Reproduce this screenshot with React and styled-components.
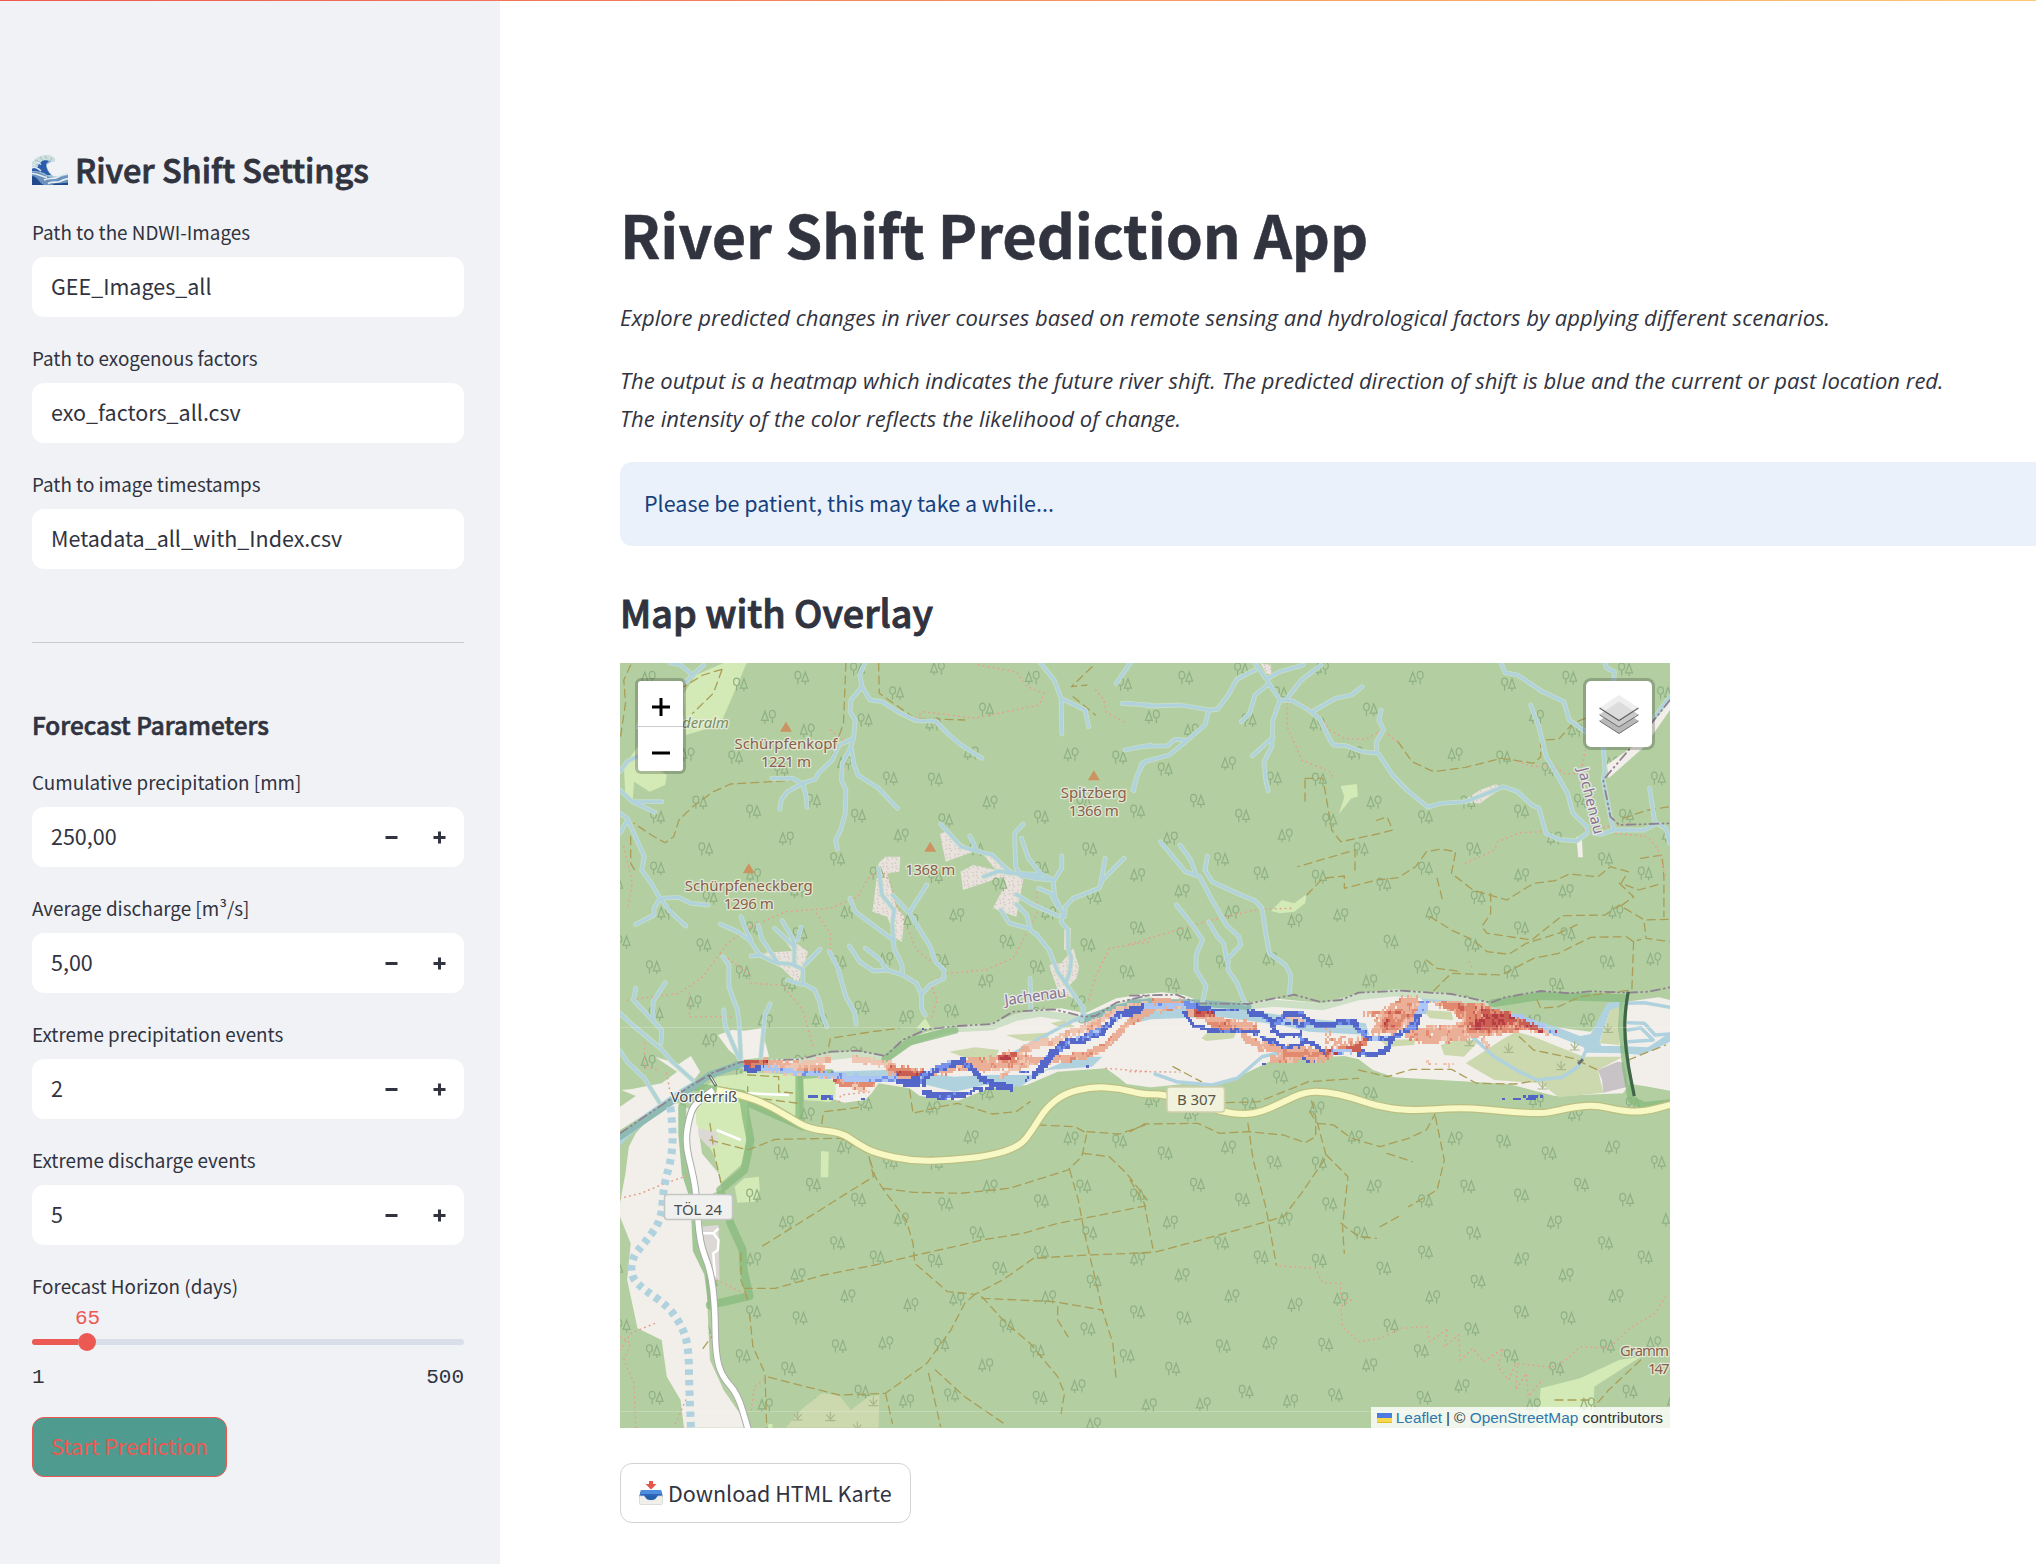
import React from "react";
import styled, { createGlobalStyle } from "styled-components";

const sans = `"Noto Sans CJK SC", "Noto Sans", sans-serif`;
const mono = `"Liberation Mono", monospace`;
const ink = "#31333f";
const primary = "#ec5953";

const GlobalStyle = createGlobalStyle`
  *, *::before, *::after { box-sizing: border-box; }
  body {
    margin: 0;
    background: #fff;
    color: ${ink};
    font-family: ${sans};
    font-size: 21.6px;
    overflow: hidden;
  }
  h1, h2, h3, p { margin: 0; }
`;

/* ---------- layout ---------- */

const Page = styled.div`
  display: flex;
  height: 1564px;
  overflow: hidden;
  border-top: 1px solid;
  border-image: linear-gradient(90deg, #f0594f, #fbc975) 1;
`;

const Sidebar = styled.aside`
  flex: 0 0 500px;
  padding: 142px 36px 0 32px;
  background: #f0f2f6;
`;

const Main = styled.main`
  flex: 1;
  min-width: 0;
  padding: 193px 0 0 120px;
`;

/* ---------- typography ---------- */

const SemiBold = `
  font-weight: 500;
  -webkit-text-stroke: 0.026em currentColor;
`;

const SidebarTitle = styled.h2`
  ${SemiBold}
  display: flex;
  align-items: center;
  gap: 7px;
  height: 54px;
  font-size: 32.4px;
  line-height: 51px;
`;

const TitleText = styled.span`
  height: 54px;
`;

const SidebarSubtitle = styled.h3`
  ${SemiBold}
  font-size: 24.3px;
  line-height: 28px;
  height: 32px;
  margin-bottom: 28px;
`;

const PageTitle = styled.h1`
  font-size: 59.4px;
  font-weight: 700;
  line-height: 79px;
  letter-spacing: -0.17px;
  -webkit-text-stroke: 0.008em currentColor;
`;

const SectionTitle = styled.h2`
  ${SemiBold}
  font-size: 37.7px;
  line-height: 50px;
  margin: 41px 0 26px;
`;

const Lead = styled.p`
  font-family: "Open Sans", "Noto Sans", sans-serif;
  font-style: italic;
  font-size: 22px;
  line-height: 38px;
  margin-top: ${(p) => p.$top}px;
`;

const Line = styled.span`
  display: block;
  letter-spacing: ${(p) => p.$tracking}px;
`;

/* ---------- form ---------- */

const Fields = styled.div`
  display: flex;
  flex-direction: column;
  gap: 30px;
  margin-top: ${(p) => p.$top || 0}px;
`;

const Field = styled.label`
  display: flex;
  flex-direction: column;
  gap: 6px;
`;

const FieldLabel = styled.span`
  font-size: 18.85px;
  line-height: 22px;
  height: 30px;
`;

const InputBox = styled.span`
  display: flex;
  align-items: center;
  height: 60px;
  padding: 0 18.5px 0 19px;
  border-radius: 12px;
  background: #fff;
  font-size: 21.5px;
  line-height: 58px;
`;

const InputValue = styled.span`
  flex: 1;
  height: 60px;
`;

const Steppers = styled.span`
  display: flex;
  gap: 35px;
`;

const Divider = styled.hr`
  height: 1px;
  margin: 73px 0 68px;
  border: 0;
  background: #c9cbd1;
`;

const Slider = styled.div`
  display: flex;
  flex-direction: column;
  margin-top: 30px;
`;

const SliderTop = styled.div`
  height: 22px;
  margin-top: 3px;
  font: 21px/22px ${mono};
  color: ${primary};
`;

const SliderValue = styled.span`
  display: inline-block;
  width: 111px;
  text-align: center;
`;

const Track = styled.div`
  display: flex;
  align-items: center;
  height: 6px;
  margin: 9px 0 21px;
  border-radius: 3px;
  background: #d9dfe9;
`;

const TrackFill = styled.div`
  width: 46px;
  height: 6px;
  border-radius: 3px 0 0 3px;
  background: ${primary};
`;

const Thumb = styled.div`
  width: 18px;
  height: 18px;
  border-radius: 50%;
  background: ${primary};
`;

const SliderRange = styled.div`
  display: flex;
  justify-content: space-between;
  font: 21px/24px ${mono};
`;

const Button = styled.button`
  display: flex;
  align-items: center;
  gap: ${(p) => p.$gap || 0}px;
  width: max-content;
  height: 60px;
  padding: 0 18px ${(p) => (p.$primary ? 2 : 0)}px;
  border: 1px solid ${(p) => (p.$primary ? primary : "#d2d3d6")};
  border-radius: 12px;
  background: ${(p) => (p.$primary ? "#509b8f" : "#fff")};
  color: ${(p) => (p.$primary ? primary : ink)};
  font: 400 21.5px/56px ${sans};
  margin-top: ${(p) => p.$top}px;
`;

const Alert = styled.div`
  height: 84px;
  margin-top: 25px;
  padding: 0 24px;
  border-radius: 12px 0 0 12px;
  background: #eaf1fb;
  color: #16407e;
  font-size: 21.5px;
  line-height: 82px;
`;

/* ---------- map ---------- */

const MapFrame = styled.div`
  position: relative;
  width: 1050px;
  height: 765px;
  overflow: hidden;
  background: #b3cfa2;
`;

const MapCanvas = styled.svg`
  display: block;
`;

const ZoomControl = styled.div`
  position: absolute;
  top: 15px;
  left: 15px;
  display: flex;
  flex-direction: column;
  border: 3px solid rgba(0, 0, 0, 0.2);
  border-radius: 6px;
  background: #fff;
  background-clip: padding-box;
`;

const ZoomButton = styled.div`
  display: flex;
  align-items: center;
  justify-content: center;
  width: 45px;
  height: 45px;
  padding-top: 7px;
  & + & {
    border-top: 1px solid #ccc;
  }
`;

const LayersControl = styled.div`
  position: absolute;
  top: 15px;
  right: 15px;
  display: flex;
  align-items: center;
  justify-content: center;
  width: 72px;
  height: 72px;
  border: 3px solid rgba(0, 0, 0, 0.2);
  border-radius: 8px;
  background: #fff;
  background-clip: padding-box;
`;

const Attribution = styled.div`
  position: absolute;
  right: 0;
  bottom: 0;
  display: flex;
  align-items: center;
  gap: 4px;
  height: 21px;
  padding: 0 7px 0 6px;
  background: rgba(255, 255, 255, 0.8);
  color: #333;
  font: 15.4px/21px "Liberation Sans", Arial, sans-serif;
  white-space: nowrap;
`;

const MapLink = styled.a`
  color: #2f78ad;
`;

/* ---------- icons ---------- */

const MinusIcon = () => (
  <svg width="13" height="13" viewBox="0 0 13 13"><path d="M0.5 6.5h12" stroke={ink} strokeWidth="3" /></svg>
);
const PlusIcon = () => (
  <svg width="13" height="13" viewBox="0 0 13 13"><path d="M0.5 6.5h12M6.5 0.5v12" stroke={ink} strokeWidth="3" /></svg>
);

const WaveIcon = () => (
  <svg width="36" height="30" viewBox="0 0 36 30">
    <path d="M0 8C3 3 9 0 15 0.500c4 0 8 2 7.500 4 1 2-1 3-3 2-2 2-4 2-5 4 1 4 3 8 7 11 6 0 10-2 14.500-3.500v12H0z" fill="#9dbfd4" />
    <path d="M0 8C3 3 9 0 15 0.500c4 0 8 2 7.500 4 1 2-1 3-3 2l-3-1c-4-1-7 1-8 3-3 0-5 1-8.500 3z" fill="#cfdfdc" />
    <path d="M9 7c2-2 5-2 8-1l-3 3c0 4 2 8 5 11l-4 0c-4-3-8-4-15-4v-2c5-2 6-3 9-7z" fill="#2d5cae" />
    <path d="M0 12c4 0 7 2 9 4M1 9.500l5 2M5 6.500l4 3" stroke="#e4eef2" strokeWidth="1.300" fill="none" />
    <path d="M0 17c7-1 12 3 17 5s12 0 19-2v10H0z" fill="#6a91bf" />
    <path d="M0 18.500c6 0 9 3 15 4M12 25c5-3 10 0 14-3s7-3 10-3M16 28.500c5-3 8 0 12-2s5-2 8-3" stroke="#e3edf0" strokeWidth="1.700" fill="none" />
    <path d="M0 21c6 1 7 7 12 9H0zM20 30c5-3 10-1 16-2.500v2.500z" fill="#214a8c" />
    <path d="M3 5l5 2m0-5l3 4m2-5l2 3m5-1l-2 3" stroke="#9fbec8" strokeWidth="1" />
  </svg>
);

const InboxIcon = () => (
  <svg width="24" height="24" viewBox="0 0 24 24">
    <path d="M0 16L2 9h20l2 7z" fill="#2c5fa8" />
    <path d="M2 9h20l1 7H1z" fill="#4d8de0" />
    <path d="M2 13h20v3l-6 4H8l-6-4z" fill="#2b66b8" />
    <path d="M0.5 15h4.500c1 0 1.500 4 7 4s6-4 7-4h4.500v7.500q0 1-1 1h-21q-1 0-1-1z" fill="#efefeb" stroke="#d2d1cc" strokeWidth="0.7" />
    <path d="M6 15c1 3 3 4 6 4s5-1 6-4z" fill="#2560ad" />
    <path d="M10 0h4v3h3.500L12 8.500 6.500 3H10z" fill="#e5574b" />
  </svg>
);

const LayersIcon = () => (
  <svg width="40" height="40" viewBox="0 0 40 40">
    <path d="M20 14L39.500 26.800 20 39.500 0.500 26.800z" fill="#b8b8b8" />
    <path d="M0.500 27L20 39.500 39.500 27" fill="none" stroke="#6e6e6e" strokeWidth="1" />
    <path d="M20 8L39.500 20.500 20 33 0.500 20.500z" fill="#cacaca" />
    <path d="M0.500 20.800L20 33 39.500 20.800" fill="none" stroke="#6e6e6e" strokeWidth="1" />
    <path d="M20 1L39.500 13.800 20 26.300 0.500 13.800z" fill="#eeeeee" />
    <path d="M20 7.500L34.500 17 20 26 5.500 17z" fill="#dcdcdc" />
    <path d="M0.500 14L20 26.500 39.500 14" fill="none" stroke="#5f5f5f" strokeWidth="1.200" />
  </svg>
);

const FlagIcon = () => (
  <svg width="15" height="10" viewBox="0 0 15 10">
    <path d="M0 0h15v5H0z" fill="#4c7be1" />
    <path d="M0 5h15v5H0z" fill="#f8d748" />
    <path d="M0 9h15v1H0z" fill="#e0bc30" />
  </svg>
);

/* ---------- map geometry ----------
   The map is digitised as four sheets; each one has its own grid. */

const sheets = {
  nw: { x: -10, y: -13, kx: 1 / 2.904, ky: 1 / 3 },
  ne: { x: 510, y: -13, kx: 1 / 2.8, ky: 1 / 3 },
  sw: { x: -10, y: 297, kx: 1 / 2.904, ky: 1 / 3 },
  se: { x: 510, y: 297, kx: 1 / 2.8, ky: 1 / 3 },
};

const project = (sheet, text) => {
  const s = sheets[sheet];
  return text.trim().split(/\s+/).map((pair) => {
    const [x, y] = pair.split(",").map(Number);
    return [s.x + x * s.kx, s.y + y * s.ky];
  });
};

const toPath = (points) => "M" + points.map(([x, y]) => `${x.toFixed(1)} ${y.toFixed(1)}`).join("L");
const lines = (entries) => entries.map(([sheet, text]) => toPath(project(sheet, text))).join("");
const areas = (entries) => entries.map(([sheet, text]) => toPath(project(sheet, text)) + "Z").join("");

/* midpoint-smoothed curve for the main roads */
const smooth = (points) => {
  let d = `M${points[0][0]} ${points[0][1]}`;
  for (let i = 1; i < points.length - 1; i++) {
    const [x, y] = points[i];
    const [nx, ny] = points[i + 1];
    d += `Q${x.toFixed(1)} ${y.toFixed(1)} ${((x + nx) / 2).toFixed(1)} ${((y + ny) / 2).toFixed(1)}`;
  }
  const last = points[points.length - 1];
  return d + `L${last[0]} ${last[1]}`;
};

const streams = lines([
  ["nw", "175,39 205,45 240,75 220,95"], ["nw", "240,75 272,45"],
  ["nw", "740,40 725,75 732,110 755,150 790,155 840,188 890,212 945,213 985,255 1020,285 1080,325"],
  ["nw", "732,110 700,150 697,185 712,210 708,260 700,290 708,340 720,375 780,415 835,475"],
  ["nw", "708,265 665,285 645,330 605,370 595,388 560,400 530,385 470,385"],
  ["nw", "560,400 515,425 497,450 493,478"], ["nw", "560,400 570,440 572,472"],
  ["nw", "700,290 675,340 672,390 685,420 683,490 670,540 655,570 660,597"],
  ["nw", "29,490 50,505 65,540 100,620 92,660 120,700 145,745 200,742 235,760 285,765"],
  ["nw", "145,745 180,790 220,828"], ["nw", "145,745 128,775 128,795 75,823"],
  ["nw", "29,550 48,515"], ["nw", "29,365 50,335 78,320"], ["nw", "29,420 65,455 150,455"], ["nw", "65,455 130,487"],
  ["nw", "1250,39 1290,90 1310,145 1380,180 1390,230"], ["nw", "1310,145 1312,252"],
  ["nw", "1510,40 1490,70 1470,100"], ["nw", "1568,330 1545,340 1530,380 1518,420"],
  ["nw", "1495,300 1570,285"], ["nw", "1487,160 1568,165"],
  ["nw", "960,522 1020,590 1065,603 1110,615 1160,665 1230,685 1285,690"],
  ["nw", "1045,558 1065,600"], ["nw", "1200,522 1175,550 1178,650 1195,680 1250,678"],
  ["nw", "1195,565 1215,625 1250,670 1285,690"], ["nw", "1085,680 1130,663 1165,670 1250,673"],
  ["nw", "1312,618 1312,655 1287,695 1292,740 1315,790 1310,815 1330,840 1330,895 1340,925 1335,965 1325,995"],
  ["nw", "1245,715 1280,730 1300,770"], ["nw", "1180,733 1225,762 1300,797"],
  ["nw", "1493,625 1430,690 1420,715 1345,745 1322,770 1320,800"], ["nw", "1438,625 1425,700"],
  ["nw", "1135,780 1160,820 1215,835 1240,855 1275,900 1300,965 1330,1010 1375,1075 1370,1110"],
  ["nw", "1180,762 1210,795 1220,835"],
  ["nw", "780,655 790,735 825,780 820,820 825,895 848,945 850,975 890,1000 905,1035 905,1075 915,1095"],
  ["nw", "920,705 870,787"], ["nw", "820,735 870,790 930,890 945,935 970,960 970,985 930,1005 905,1032"],
  ["nw", "697,745 712,785 825,872"], ["nw", "695,888 725,935 765,963 805,960 850,975"], ["nw", "742,895 780,925 805,960"],
  ["nw", "637,905 660,950 685,1040 710,1085 715,1122"],
  ["nw", "320,822 370,845 405,870 435,915 480,938 530,943 560,958 560,1000 595,1020 610,1060 615,1090 630,1130"],
  ["nw", "380,800 395,840 410,870"], ["nw", "430,825 440,865 485,935"], ["nw", "410,918 440,915"],
  ["nw", "478,835 520,875 535,890 535,940"], ["nw", "500,812 530,865 537,890"], ["nw", "555,832 545,870"],
  ["nw", "610,897 565,945"], ["nw", "515,990 555,1003"],
  ["nw", "328,920 345,945 345,1010 370,1080 375,1120 380,1225"], ["nw", "330,1080 335,1130 375,1225"],
  ["nw", "465,1062 450,1095 438,1220"],
  ["nw", "75,1015 68,1050 100,1085 150,1140 148,1180"], ["nw", "160,998 125,1055 125,1105"],
  ["nw", "29,1090 60,1120 150,1198 180,1235 240,1290"], ["sw", "29,272 50,305 100,355 145,430"],
  ["nw", "1220,985 1222,1080"],
  ["ne", "0,160 60,168 140,165 225,180 245,178 275,135 300,87 350,60"],
  ["ne", "0,297 30,290 105,287 125,268 150,270"], ["ne", "10,422 20,375 40,335 110,315 150,280 210,225 220,180"],
  ["ne", "350,40 380,85 420,150 455,152 500,180 530,205 560,270 570,285 605,287 650,305 695,310 735,375 775,420 835,472 870,460 940,455 1000,430 1045,410 1085,425 1125,465 1145,475 1165,550 1200,568 1250,573 1280,550 1280,530 1240,490 1225,430 1185,355 1165,320 1145,230 1122,165"],
  ["ne", "385,85 420,65 485,45"], ["ne", "535,45 480,90 440,145"], ["ne", "385,105 350,135 335,190 312,215"],
  ["ne", "420,150 400,210 397,290 375,335 380,390 387,422"], ["ne", "400,262 342,318"],
  ["ne", "510,185 575,145 620,135 650,110"], ["ne", "703,180 697,210 710,240 690,275 690,308"],
  ["ne", "1040,40 1050,68 1085,75 1155,125 1215,155 1230,210 1275,245"],
  ["ne", "1330,40 1335,55 1357,65 1355,90"], ["ne", "1325,295 1330,360 1325,390 1345,500 1355,540 1320,553 1300,550"],
  ["ne", "1512,140 1470,200"], ["ne", "1355,540 1440,540 1475,520 1500,535 1512,580"], ["ne", "1455,415 1470,520"],
  ["ne", "85,575 155,665 195,680 230,750 270,825 305,860 310,885 275,925 275,960 300,1000 322,1060"],
  ["ne", "140,585 170,630 185,675"],
  ["ne", "217,618 210,660 230,695 300,730 350,752 370,775 380,850 390,910 435,945 450,975 447,1030"],
  ["ne", "130,765 175,825 203,870 185,915 185,960 213,1008 203,1055"], ["ne", "220,815 245,860 262,880 272,935"],
]);

const riverArms = lines([
  ["se", "70,342 130,365 230,375 300,355 370,290 430,275"], ["se", "960,232 1020,290 1090,335 1140,360 1210,352 1255,320 1275,275"],
  ["se", "1390,130 1440,128 1512,142"], ["se", "1395,188 1440,190 1470,225 1512,222"], ["se", "1395,210 1430,203 1465,240 1395,245"],
  ["sw", "1165,285 1240,240 1330,190 1380,165"],
]);

const water = areas([
  ["se", "800,98 920,108 1040,150 1110,172 1200,203 1260,228 1290,222 1335,130 1380,122 1375,150 1345,150 1315,245 1320,258 1370,258 1450,262 1512,218 1512,245 1460,272 1430,285 1380,280 1275,278 1270,262 1180,222 1080,190 1000,150 820,122"],
  ["sw", "29,525 90,470 200,390 290,335 380,302 460,322 640,335 800,330 910,340 1000,350 1100,345 1230,345 1350,290 1430,290 1400,320 1270,330 1190,380 1090,375 1000,395 900,370 700,350 380,322 300,350 190,420 60,525 29,556"],
  ["se", "0,140 160,140 330,150 480,175 660,190 670,225 500,215 420,195 250,170 60,178 0,192"],
]);

const beds = areas([
  ["sw", "380,300 440,300 640,292 715,280 800,292 850,245 920,215 1000,205 1110,195 1170,165 1230,150 1310,145 1380,160 1470,115 1568,100 1568,370 1500,345 1440,325 1300,335 1210,375 1100,385 1040,410 1010,422 900,408 870,385 780,370 760,400 740,420 680,428 650,418 640,380 560,345 450,330 380,325"],
  ["se", "0,105 90,97 150,105 200,125 330,132 400,115 540,130 640,120 720,95 860,100 1040,150 1180,200 1290,215 1360,130 1480,112 1512,120 1512,392 1440,378 1400,372 1380,400 1190,408 1060,372 740,352 680,330 640,298 600,288 400,300 300,352 235,378 150,372 60,382 0,372"],
  ["sw", "1480,355 1440,325 1568,310 1568,382 1500,372"],
  ["sw", "130,290 200,312 235,288 262,335 225,385 160,425 29,510 29,440 75,408 33,390 60,388 150,370 195,335"],
  ["sw", "150,435 200,430 250,460 270,600 258,700 275,860 290,1200 330,1290 405,1403 215,1403 205,1320 165,1250 150,1140 80,1105 50,960 60,850 29,770 29,730 45,640 55,560 75,520"],
  ["sw", "313,225 355,210 390,212 440,205 462,290 380,300 345,270"],
  ["sw", "235,540 275,590 315,640 325,690 300,700 290,740 250,735 245,650"],
  ["ne", "1335,345 1420,280 1512,150 1512,180 1440,290 1340,385"], ["ne", "1250,560 1265,560 1268,622 1255,622"],
]);

const screes = areas([
  ["nw", "958,552 975,545 1055,605 975,635"], ["nw", "1018,665 1055,645 1120,660 1085,615 1120,620 1200,690 1180,800 1112,775 1150,700 1140,680 1025,720"],
  ["nw", "780,640 800,620 843,620 840,665 805,670 830,770 855,800 848,875 830,865 805,800 762,785"],
  ["nw", "480,835 575,905 545,1002 500,955 440,925 450,908 530,903"],
  ["nw", "1275,945 1310,940 1345,895 1362,950 1355,985 1330,1010 1345,1045 1300,1020"], ["nw", "1320,830 1338,835 1336,895 1318,900"],
  ["ne", "925,458 980,420 1025,403 1040,415 980,460"], ["ne", "365,40 395,45 395,75 380,70"],
]);

const meadows = areas([
  ["nw", "250,75 330,39 397,39 355,140 320,225 220,255 215,130"], ["nw", "40,350 80,290 215,250 120,345 165,375 160,405 115,425 70,395 65,460 45,440"],
  ["ne", "590,408 635,402 638,440 620,445 585,492 600,440"], ["ne", "395,783 425,750 460,760 495,732 490,760 460,785 420,790"],
  ["sw", "270,390 310,350 400,340 545,345 550,470 500,460 400,415 395,540 385,610 325,665 300,580 245,490 230,450"],
  ["sw", "560,350 655,360 655,410 640,425 565,420"], ["sw", "613,573 635,575 634,652 612,652"],
  ["sw", "362,680 390,655 432,650 435,690 420,725 370,728"], ["sw", "890,205 915,175 935,208"],
  ["se", "1150,1285 1260,1255 1370,1200 1430,1190 1300,1280 1295,1403 1140,1403"], ["sw", "460,1392 472,1392 472,1403 458,1403"],
]);

const scrub = areas([
  ["sw", "510,1403 560,1345 615,1300 665,1305 700,1350 750,1310 782,1305 780,1403"],
  ["sw", "1150,225 1270,218 1275,240 1200,243"], ["sw", "985,275 1060,262 1130,270 1110,310 1050,300"], ["sw", "1280,190 1320,180 1350,200 1310,205"],
  ["se", "200,235 230,205 300,210 290,235 215,243"], ["se", "820,150 900,155 905,180 840,175"], ["se", "700,240 800,238 795,255 720,260"],
  ["se", "940,310 1040,240 1080,215 1130,230 1270,290 1380,290 1310,330 1325,398 1200,412 1150,370 1020,360"],
  ["se", "870,255 930,235 975,245 935,290 880,285"], ["se", "1345,150 1370,140 1370,255 1315,250"],
]);

const protectedStrips = lines([
  ["sw", "550,470 550,345 640,340"], ["sw", "245,380 385,402 395,470 408,540 390,630 320,690 350,790 385,870 388,930 405,1008 290,1035"],
  ["sw", "210,440 210,520 220,640 245,720 252,870 285,940 298,1040"], ["sw", "385,420 460,455 560,500"],
  ["sw", "800,296 870,245 1000,210"],
  ["se", "1015,130 1150,108 1250,110 1385,115"], ["se", "1383,120 1378,200 1390,330 1405,420 1440,438 1512,430"],
]);
const paleStrips = lines([
  ["sw", "550,305 640,290 710,282 800,298 860,250 980,208 1110,200 1180,172 1250,160 1380,180 1470,140 1568,120"],
  ["se", "0,128 180,130 330,138 400,130 540,140 640,110 740,98 900,112 1010,138"],
]);
const greenStream = lines([["sw", "29,530 200,410 290,345 380,312 450,312"], ["sw", "1370,180 1470,145 1568,125"], ["se", "0,128 180,128 330,140"]]);

const boundary = lines([
  ["sw", "29,520 200,400 295,340 380,306 550,298 640,275 720,272 800,288 850,240 920,208 1010,198 1110,192 1170,155 1290,148 1375,170 1410,168 1470,128 1568,105"],
  ["se", "0,107 130,104 190,130 330,132 390,118 460,104 530,125 590,120 640,98 760,92 900,102 1010,128 1050,112 1150,93 1230,100 1290,94 1395,98 1450,95 1512,82"],
  ["ne", "1512,150 1460,220 1325,390 1345,500 1370,525 1512,520"],
]);

const trails = lines([
  ["nw", "685,39 678,220 640,330"], ["nw", "780,39 782,130 885,205 1030,210"], ["nw", "545,390 420,398 350,402 300,425 240,470 200,510 185,560 160,578 120,555 70,520"],
  ["nw", "60,45 40,90 45,160 29,270"], ["nw", "325,58 270,75 215,110"], ["nw", "325,60 300,130 240,190"], ["nw", "60,560 60,640 75,665"], ["nw", "1400,50 1340,110 1385,105"], ["nw", "1345,140 1410,195"],
  ["nw", "635,1190 640,1165 760,1145 840,1135"],
  ["ne", "750,275 790,335 850,365 940,352 1040,325 1130,340 1150,320 1150,270 1200,268 1240,220 1275,205"],
  ["ne", "490,385 540,385 565,540 590,575 680,555 735,540 720,500 680,515"], ["ne", "490,390 490,455"],
  ["ne", "495,735 540,685 600,678 600,715 690,690 750,683 800,650 830,605 870,597 912,605 900,670 960,720 1055,750 1130,700 1190,692 1230,672 1310,680 1345,650 1395,665 1375,700 1425,720 1490,700"],
  ["ne", "630,660 630,600 470,650"], ["ne", "1010,730 1010,790 985,830 1000,850 1125,870 1210,797 1330,795 1370,765 1440,810 1512,808"], ["ne", "1440,820 1445,865 1512,875"],
  ["ne", "860,685 875,750"], ["ne", "840,800 900,840 960,870 1000,905 1060,913 1110,880 1200,850 1260,820"],
  ["ne", "1410,875 1405,1025"], ["ne", "850,1022 900,970 1040,975 1130,925 1200,910 1290,862 1390,860 1410,875 1430,868"], ["ne", "830,930 860,955 930,965"],
  ["ne", "1430,625 1490,615 1495,680 1495,800"], ["ne", "1380,505 1450,480 1512,470"], ["ne", "1370,700 1410,740 1365,775"],
  ["ne", "1140,1050 1150,1075 1200,1070 1260,1040 1400,1020"],
  ["sw", "290,540 400,570 480,538 670,535 750,580 765,650 440,860"], ["sw", "755,600 770,650 795,690 860,780 880,850 885,910 980,995 1060,1003 1140,960 1230,895 1390,885 1568,878"],
  ["sw", "795,685 880,697 1020,700 1160,685 1330,630 1370,590 1385,520 1350,500 1250,495"], ["sw", "1385,515 1480,522 1568,490"],
  ["sw", "1060,1003 1030,1030 990,1110 920,1210 800,1300 665,1305 455,1250"], ["sw", "390,985 480,985 620,945 770,915 890,885 1000,860 1080,840 1200,820 1300,790 1400,770 1568,735"],
  ["sw", "405,1060 415,1160 450,1240 455,1403"], ["sw", "380,880 380,960 400,1020"], ["sw", "1080,1010 1150,1090 1220,1150 1300,1250 1320,1300 1310,1360"],
  ["sw", "1080,1015 1290,1025 1430,1050 1460,1150 1470,1260"], ["sw", "1335,630 1360,720 1380,830 1410,960 1430,1050"], ["sw", "1375,580 1450,590 1500,640 1560,720"],
  ["sw", "800,1300 820,1390"], ["sw", "945,1230 1030,1310 1150,1395"], ["sw", "925,1240 945,1330 960,1400"], ["sw", "1300,1040 1300,1080 1330,1130"],
  ["sw", "400,345 490,350 490,395 540,400"], ["sw", "400,380 400,410 545,430"], ["sw", "870,390 880,460 960,440 1010,430 1110,462 1180,455 1220,425"], ["sw", "615,490 620,455 740,440"],
  ["se", "0,515 40,492 190,490 250,520 330,515 430,525 490,548 520,530 520,470 505,410"], ["se", "330,490 345,600 380,740 410,915"], ["se", "0,880 75,875 250,825 430,770 480,700 550,590 525,490 500,450"],
  ["se", "525,490 570,495 620,535 700,560 780,535 830,510 855,460"], ["se", "855,470 880,600 860,690 780,740"], ["se", "550,585 610,650 595,800 600,880"], ["se", "590,790 640,830 690,835"], ["se", "720,580 790,605"], ["se", "0,660 40,730 65,870"],
  ["se", "270,428 360,425 500,365 640,355"], ["se", "120,320 200,365"], ["se", "640,330 720,350 790,328 900,328 970,370 1080,372 1150,360"], ["se", "1090,230 1130,270 1240,295 1310,330"], ["se", "1395,300 1500,255"], ["se", "700,800 760,765"],
  ["se", "1430,1200 1340,1290 1300,1340"], ["se", "1190,1320 1300,1320"], ["sw", "290,490 305,590 325,680"], ["sw", "270,1165 295,1130"],
]);

const footpaths = lines([
  ["nw", "1070,45 1180,65 1210,110 1262,130 1245,165 1060,205 910,185 880,210"], ["nw", "1410,120 1435,150 1440,185 1500,220"], ["nw", "640,240 700,290 680,360"], ["nw", "40,590 65,700 50,780"], ["nw", "320,910 340,880 410,830 510,785 640,775 720,740 750,685 790,660 815,700 830,760 870,850 890,900 940,940"],
  ["nw", "600,790 640,850 640,900"], ["nw", "50,1050 200,1030 270,980 320,910 400,970 410,1000 500,1005 560,1080 590,1190"], ["nw", "230,1030 230,1100 360,1100"], ["nw", "935,1100 950,1050 930,1000 980,970 1090,960 1170,925 1215,840 1240,790 1240,720"], ["nw", "1390,1050 1410,980 1450,895 1568,875"],
  ["ne", "455,145 520,185 560,240 600,265 660,268 705,240 750,275"], ["ne", "440,160 440,230 465,290 480,330 560,365 572,390"], ["ne", "1085,335 1130,350 1180,345 1220,372 1262,370 1275,300"], ["ne", "0,882 100,850 220,812 360,778 460,775"], ["ne", "940,640 1020,600 1030,575 1090,548 1160,545"], ["ne", "1270,540 1400,520"], ["ne", "1360,550 1450,560 1480,600 1500,680"], ["ne", "950,935 960,960"],
  ["sw", "29,715 90,700 160,670 230,645"], ["sw", "310,960 390,1000"], ["sw", "29,1130 60,1150 40,1200 70,1270 75,1403"], ["sw", "29,1170 60,1120 130,1090"], ["sw", "190,1390 220,1320"], ["sw", "410,1350 420,1280 450,1255"], ["sw", "100,250 100,320 140,330"], ["sw", "165,340 175,400"],
  ["sw", "1440,325 1568,335"], ["se", "0,335 140,336"], ["se", "420,918 520,925 540,970 590,970 590,1010 620,1020 590,1040 595,1100 640,1145 700,1135 760,1105 830,1100 840,1145 890,1105 880,1160 920,1125 925,1200 960,1165 990,1205 1045,1165 1030,1220 1060,1260 1080,1210 1180,1222 1220,1200 1260,1160 1340,1165 1400,1105 1470,1060 1500,1010"],
  ["se", "1085,1220 1080,1290 1110,1240 1115,1310 1150,1265"], ["sw", "665,425 670,405 760,395"],
]);

const whiteRoad = project("sw", "300,390 250,425 230,470 218,550 240,640 250,700 260,850 292,930 305,1040 306,1180 325,1250 370,1300 400,1403 404,1420");
const sideRoads = lines([["sw", "265,820 300,820 315,840 313,870 300,880 305,950"], ["sw", "315,805 300,820"], ["sw", "400,400 520,405"], ["sw", "310,510 380,540"]]);
const mainRoad = [
  ...project("sw", "310,390 385,405 460,435 520,472 580,508 670,516 720,552 770,580 880,604 990,600 1100,588 1190,560 1230,505 1265,445 1320,400 1400,380 1480,385 1550,404"),
  ...project("se", "90,402 200,435 255,455 320,464 370,455 430,425 490,396 550,395 620,412 690,438 780,453 930,442 1060,455 1160,462 1240,440 1310,436 1360,450 1430,458 1530,430"),
];
const tunnel = project("sw", "175,440 183,500 180,590 155,680 150,780 100,850 65,890 60,950 100,990 170,1040 210,1100 228,1160 230,1280 235,1403");

/* forest symbols repeat once per 384px tile; "a" = broadleaf first, "b" = conifer first */
const forestTile = "112,83,b 378,103,a 556,83,a 718,57,a 831,129,a 952,55,b 461,200,b 574,241,b 740,210,a 939,222,b 1092,178,a 225,313,b 364,322,a 496,358,a 682,340,b 813,385,a 944,388,a 1050,309,b 260,457,a 416,484,a 590,452,a 721,497,a 847,556,b 974,510,a 1105,457,b 137,501,a 513,565,b 277,597,a 660,627,a 1065,597,a 137,655,a 418,675,b 775,670,a 944,680,a 290,743,a 160,789,b 547,723,b 692,786,b 1008,795,b 875,812,b 1131,703,a 416,834,a 551,852,a 272,885,a 37,875,a 125,951,a 386,966,a 802,927,b 665,936,a 962,932,a 1092,993,b 245,1056,b 518,1004,a 609,1110,b 731,1073,a 862,1101,b 991,1083,a 133,1091,a 452,1113,b 290,1171,b"
  .split(" ")
  .map((t) => {
    const [x, y, kind] = t.split(",");
    return [...project("nw", `${x},${y}`)[0], kind];
  });

const treePath = forestTile
  .map(([x, y, kind]) => {
    const s = kind === "a" ? 1 : -1;
    const bx = x - 3.6 * s;
    const px = x + 3.8 * s;
    return (
      `M${bx - 2.900} ${y - 2.500}a2.900 3.700 0 1 1 5.800 0a2.900 3.700 0 1 1 -5.800 0M${bx} ${y + 1}V${y + 6.500}` +
      `M${px} ${y - 5.500}L${px - 3.400} ${y + 3.800}H${px + 3.400}ZM${px} ${y + 3.800}V${y + 7}`
    );
  })
  .join("");

const tiles = [-1, 0, 1, 2].flatMap((i) => [-1, 0, 1, 2].map((j) => [i * 384, j * 384]));

/* ---------- shift heatmap ---------- */

const CELL_W = 1.9;
const CELL_H = 2.7;
const palette = ["#edc3ae", "#e9ab90", "#df8468", "#c95549", "#b2323a", "#a9c4f4", "#6d8bea", "#4b5fc8"];

const random = (() => {
  let seed = 20240;
  return () => {
    seed = (seed * 1664525 + 1013904223) % 4294967296;
    return seed / 4294967296;
  };
})();

const heat = new Map();
/* neighbouring cells share a tone, so intensities form small clusters */
const clusterTone = (cx, cy, tones) => {
  const h = Math.sin(Math.floor(cx / 3) * 127.1 + Math.floor(cy / 2) * 311.7) * 43758.5453;
  const base = h - Math.floor(h);
  return tones[Math.floor((base * 0.75 + random() * 0.25) * tones.length)];
};
const put = (cx, cy, tones) => heat.set(`${cx},${cy}`, clusterTone(cx, cy, tones));

/* brush a ribbon of cells along a line */
const ribbon = (sheet, text, width, tones, density = 1) => {
  const pts = project(sheet, text);
  let wobble = 0;
  for (let i = 1; i < pts.length; i++) {
    const [ax, ay] = pts[i - 1];
    const [bx, by] = pts[i];
    const steps = Math.max(1, Math.ceil(Math.hypot(bx - ax, by - ay)));
    const steep = Math.abs(by - ay) > Math.abs(bx - ax);
    for (let k = 0; k <= steps; k++) {
      if (k % 4 === 0) wobble = (random() - 0.5) * 1.8;
      const x = ax + ((bx - ax) * k) / steps;
      const y = ay + ((by - ay) * k) / steps;
      const half = width / 2;
      for (let o = -half; o <= half; o += 1.3) {
        if (random() < density) {
          put(Math.round((x + (steep ? o + wobble : 0)) / CELL_W), Math.round((y + (steep ? 0 : o + wobble)) / CELL_H), tones);
        }
      }
    }
  }
};

/* fill a polygon with cells */
const patch = (sheet, text, tones, density = 0.98) => {
  const p = project(sheet, text);
  const xs = p.map((q) => q[0]);
  const ys = p.map((q) => q[1]);
  for (let cx = Math.floor(Math.min(...xs) / CELL_W); cx <= Math.max(...xs) / CELL_W; cx++) {
    for (let cy = Math.floor(Math.min(...ys) / CELL_H); cy <= Math.max(...ys) / CELL_H; cy++) {
      const x = cx * CELL_W + (random() - 0.5) * 4;
      const y = cy * CELL_H + (random() - 0.5) * 3;
      let inside = false;
      for (let i = 0, j = p.length - 1; i < p.length; j = i++) {
        if (p[i][1] > y !== p[j][1] > y && x < ((p[j][0] - p[i][0]) * (y - p[i][1])) / (p[j][1] - p[i][1]) + p[i][0]) inside = !inside;
      }
      if (inside && random() < density) put(cx, cy, tones);
    }
  }
};

const PALE = [0, 0, 0, 1];
const SOFT = [0, 1, 1, 1, 2];
const WARM = [1, 2, 2, 2, 3];
const HOT = [2, 3, 3, 4];
const SKY = [5, 5, 5, 6];
const BLUE = [6, 6, 7, 5];
const DEEP = [7, 7, 7, 7, 7, 6];

ribbon("sw", "450,308 560,318 620,330", 7, SOFT, 0.8);
ribbon("sw", "510,322 560,305 635,293", 4, PALE, 0.7);
ribbon("sw", "700,293 760,300 825,312", 4, PALE, 0.6);
ribbon("sw", "400,318 540,335 640,345", 3, PALE);
ribbon("sw", "650,358 700,372 765,368", 4, WARM);
ribbon("sw", "700,375 740,390", 3, PALE, 0.5);
patch("sw", "800,312 860,320 920,330 1010,300 1040,290 1090,290 1150,270 1200,275 1240,300 1160,320 1080,330 1010,325 950,345 850,352 800,345", SOFT);
patch("sw", "800,316 860,318 915,330 900,345 830,345", WARM);
ribbon("sw", "830,338 905,336", 3.500, HOT);
ribbon("sw", "1125,292 1175,278", 3, HOT);
ribbon("sw", "1190,268 1240,248 1290,238 1340,215 1400,190 1440,165 1490,145 1540,133 1568,135", 6, PALE, 0.6);
ribbon("sw", "1385,205 1420,190", 7, SOFT);
ribbon("sw", "1180,300 1240,300 1330,290 1400,275 1440,255 1470,220 1500,185 1568,150", 6, SOFT, 0.8);
ribbon("sw", "1130,350 1160,325 1210,305", 3, PALE, 0.5);
ribbon("sw", "385,306 455,309", 6, HOT);
ribbon("sw", "645,345 655,352", 4, HOT);
ribbon("sw", "388,324 445,324", 3, DEEP);
ribbon("sw", "440,320 500,328 560,335 640,342 740,355 830,348", 3, SKY, 0.8);
ribbon("sw", "680,355 830,352", 3, [5, 5, 6]);
ribbon("sw", "830,360 900,355 950,322 1020,298 1045,320 1080,355 1120,372 1168,380", 4, DEEP);
ribbon("sw", "900,345 960,315 1000,300", 3.500, BLUE);
ribbon("sw", "850,370 910,368", 1.500, DEEP);
ribbon("sw", "908,395 950,402 1030,405", 4.500, DEEP);
ribbon("sw", "1010,405 1060,385 1130,372", 1.500, DEEP, 0.5);
ribbon("sw", "1225,345 1240,335 1275,290 1310,245 1370,238 1430,210 1470,165 1510,150 1568,135", 4.500, DEEP);
ribbon("sw", "1190,365 1225,345", 1, DEEP, 0.4);
ribbon("sw", "1260,305 1290,265 1330,250", 7, DEEP);
ribbon("sw", "1330,245 1420,205 1480,165", 2, BLUE);
ribbon("sw", "575,408 600,408", 1, DEEP); ribbon("sw", "612,410 640,408", 3, DEEP, 0.6); ribbon("sw", "730,414 735,414", 1, DEEP);
ribbon("sw", "1185,333 1210,333", 1, DEEP, 0.4); ribbon("sw", "1383,319 1387,319", 1, DEEP); ribbon("sw", "906,205 909,205", 0, DEEP);

ribbon("se", "0,165 60,145 140,128", 7, SOFT, 0.6);
ribbon("se", "60,120 150,122", 3, SOFT);
ribbon("se", "155,150 200,160 260,185 350,200", 7, SOFT);
ribbon("se", "180,152 230,160", 4, HOT);
patch("se", "210,180 300,195 330,215 300,218 240,205", WARM);
ribbon("se", "310,225 360,255 430,265 530,275", 6, SOFT);
ribbon("se", "390,292 470,292 550,290", 4, SOFT, 0.8);
ribbon("se", "430,280 560,275", 3, WARM);
patch("se", "550,205 570,230 650,225 655,250 600,270 545,265", SOFT, 0.6);
ribbon("se", "545,278 600,266 640,262", 3, HOT);
ribbon("se", "630,258 660,240", 4, HOT);
patch("se", "640,155 690,150 740,125 750,108 800,105 812,150 800,180 740,220 660,215 690,190 680,170", SOFT);
patch("se", "710,150 770,145 780,165 745,205 700,212", WARM);
ribbon("se", "722,150 712,200", 2, HOT, 0.6);
patch("se", "830,118 900,118 985,132 1060,155 1120,185 1188,222 1120,208 1060,215 980,225 920,240 820,248 760,225 800,195 900,192 925,178 910,158 850,130", SOFT);
patch("se", "840,120 980,130 1060,152 1120,185 1140,200 1060,210 940,215 920,195 940,165", WARM);
patch("se", "965,135 1060,155 1085,180 1030,200 960,210 940,185 990,170", [2, 3, 3, 4, 3]);
ribbon("se", "1090,180 1150,205", 4, HOT);
patch("se", "815,298 860,305 910,305 925,330 900,320 840,308", PALE, 0.35);
ribbon("se", "985,235 1005,262", 3, PALE, 0.4);
ribbon("se", "435,170 480,180", 5, PALE, 0.4);
ribbon("se", "0,152 30,140", 4, DEEP); ribbon("se", "40,135 150,133", 2, SKY, 0.7);
ribbon("se", "150,125 190,138", 5, BLUE);
ribbon("se", "190,146 300,148", 2, DEEP);
ribbon("se", "330,152 370,165 400,185 430,162 480,158 505,185 550,192", 3.500, DEEP);
ribbon("se", "400,185 500,190", 2.500, BLUE);
ribbon("se", "550,190 590,184 630,184 635,205 655,215", 3.500, DEEP);
ribbon("se", "650,212 662,230 690,233 735,228 770,208 790,190", 3.500, BLUE);
ribbon("se", "770,208 800,195 810,150", 5, [6, 7]);
ribbon("se", "812,155 822,125", 7, [5, 5, 6]);
ribbon("se", "152,152 175,192 215,205 280,210 360,212", 1.500, DEEP);
ribbon("se", "395,185 400,210 420,222 475,220 482,242 515,250 540,272", 2.500, DEEP);
ribbon("se", "365,230 400,240 430,260 480,250", 1.500, DEEP);
ribbon("se", "560,272 620,270", 2, SKY, 0.7);
ribbon("se", "635,276 690,278 722,262 730,238", 2.800, DEEP);
ribbon("se", "1060,162 1100,170 1140,190 1190,215", 2, SKY, 0.5);
ribbon("se", "1180,212 1190,220", 3, [4, 5], 0.4);
ribbon("se", "372,306 378,306", 1, DEEP); ribbon("se", "455,297 520,296", 1, DEEP, 0.25);
ribbon("se", "1075,413 1090,413", 1, DEEP); ribbon("se", "1100,410 1150,409", 2, DEEP, 0.6); ribbon("se", "1041,414 1044,414", 1, DEEP);

const heatLayers = palette.map((color, tone) => {
  let d = "";
  heat.forEach((t, key) => {
    if (t !== tone) return;
    const [cx, cy] = key.split(",");
    d += `M${(cx * CELL_W).toFixed(1)} ${(cy * CELL_H).toFixed(1)}h${CELL_W}v${CELL_H}h-${CELL_W}z`;
  });
  return { color, d };
});

const peaks = [
  { sheet: "nw", at: "511,232", width: 103, name: "Schürpfenkopf", height: "1221 m", dy: 22 },
  { sheet: "nw", at: "1405,377", width: 66, name: "Spitzberg", height: "1366 m", dy: 22 },
  { sheet: "nw", at: "403,656", width: 128, name: "Schürpfeneckberg", height: "1296 m", dy: 22 },
  { sheet: "nw", at: "930,592", width: 0, name: "", height: "1368 m", dy: 10 },
];

const MapLabel = styled.text`
  font-family: "Noto Sans", sans-serif;
  font-size: ${(p) => p.$size || 15}px;
  font-style: ${(p) => (p.$italic ? "italic" : "normal")};
  fill: ${(p) => p.$color || "#8a5f4b"};
  stroke: ${(p) => p.$halo || "rgba(238,240,226,0.75)"};
  stroke-width: 2.600px;
  stroke-linejoin: round;
  paint-order: stroke;
  text-anchor: ${(p) => p.$anchor || "middle"};
`;

const Terrain = () => (
  <MapCanvas width="1050" height="765" viewBox="0 0 1050 765">
    <defs>
      <pattern id="scree" width="9" height="9" patternUnits="userSpaceOnUse">
        <rect width="9" height="9" fill="#e9e2dc" />
        <path d="M1 2l2 1.500M5 1l1 2M7 5l-2 1M2 7l1-2M8 8l-2-.5" stroke="#c9bfb9" strokeWidth="0.8" />
      </pattern>
    </defs>
    <path d={meadows} fill="#d3e9b6" />
    <path d={screes} fill="url(#scree)" />
    <g fill="none" stroke="#90b184" strokeWidth="1.250">
      {tiles.map(([x, y]) => <path key={`${x}/${y}`} d={treePath} transform={`translate(${x} ${y})`} />)}
    </g>
    <path d={beds} fill="#f2efea" />
    <path d={areas([["sw", "250,430 300,395 385,410 395,540 385,610 325,665 300,580 250,490"], ["sw", "560,350 655,360 655,410 640,425 565,420"]])} fill="#d3e9b6" />
    <path d={areas([["sw", "385,335 545,345 550,460 500,455 400,405"]])} fill="#d3e9b6" />
    <path d={water} fill="#b0d2de" />
    <path d={scrub} fill="#ccd8ae" />
    <g fill="none" stroke="#aab78e" strokeWidth="1.200">
      {["se|1060,265", "se|1338,205", "se|1207,317", "se|950,245", "se|1155,375", "se|1245,258", "sw|640,1370", "sw|765,1325", "sw|718,1400", "sw|545,1368"].map((m) => {
        const [sheet, at] = m.split("|");
        const [[x, y]] = project(sheet, at);
        return <path key={m} d={`M${x - 5} ${y + 4}h10M${x} ${y + 4}v-9M${x} ${y + 3}l-4-5M${x} ${y + 3}l4-5`} />;
      })}
    </g>
    <path d={areas([["se", "1310,330 1365,305 1383,308 1395,380 1325,398 1322,360"]])} fill="#c7c3c6" />
    <path d={areas([["sw", "262,800 315,795 318,960 300,960 285,880 262,860"], ["sw", "255,505 310,515 312,555 285,560 258,530"]])} fill="#dcd8d6" />
    <g fill="none" strokeLinejoin="round" strokeLinecap="round">
      <path d={paleStrips} stroke="#cddfc4" strokeWidth="7" />
      <path d={protectedStrips} stroke="#86b97b" strokeOpacity="0.75" strokeWidth="8" />
      <path d={greenStream} stroke="#8dbab2" strokeWidth="7" />
      <path d={trails} stroke="#aa9d56" strokeWidth="1.300" strokeDasharray="8 5" />
      <path d={footpaths} stroke="#e4a08f" strokeWidth="1.600" strokeDasharray="0.500 4.500" />
      <path d={streams} stroke="#c6ddca" strokeWidth="4.800" />
      <path d={streams} stroke="#afd2dd" strokeWidth="3" />
      <path d={riverArms} stroke="#b0d2de" strokeWidth="3.500" />
      <path d={boundary} stroke="#8f8291" strokeWidth="1.800" strokeDasharray="9 4 1 4 1 4" />
    </g>
    <g fill="none" strokeLinejoin="round">
      <path d={smooth(tunnel)} stroke="#b0d2de" strokeWidth="8" strokeDasharray="5.500 5" />
      <path d={sideRoads} stroke="#fff" strokeWidth="2.500" />
      <path d={smooth(whiteRoad)} stroke="#a9aaa6" strokeWidth="7.500" />
      <path d={smooth(whiteRoad)} stroke="#fff" strokeWidth="5.500" />
      <path d={smooth(mainRoad)} stroke="#babf84" strokeWidth="8.500" />
      <path d={smooth(mainRoad)} stroke="#f7f8c4" strokeWidth="6" />
      <path d={smooth(project("se", "1395,95 1386,150 1385,230 1395,320 1412,408"))} stroke="#3f6649" strokeWidth="3.200" />
      <path d={lines([["sw", "288,345 308,378"], ["se", "1255,312 1268,298"]])} stroke="#66716a" strokeWidth="3" />
      <path d={lines([["sw", "292,350 306,374"]])} stroke="#fff" strokeWidth="1" />
    </g>
    <g shapeRendering="crispEdges">
      {heatLayers.map((l) => <path key={l.color} d={l.d} fill={l.color} fillOpacity="0.94" />)}
    </g>
    <path d="M0 364.500H1050M0 748.500H1050" stroke="#fff" strokeOpacity="0.22" />

    {peaks.map((p) => {
      const [[x, y]] = project(p.sheet, p.at);
      return (
        <g key={p.at}>
          <path d={`M${x - 6} ${y + 4.500}L${x} ${y - 5.500}L${x + 6} ${y + 4.500}Z`} fill="#cc9260" />
          {p.name && <MapLabel x={x} y={y + p.dy} textLength={p.width}>{p.name}</MapLabel>}
          <MapLabel x={x} y={y + p.dy + 18} textLength="50">{p.height}</MapLabel>
        </g>
      );
    })}
    <MapLabel x="109" y="65" $anchor="end" $italic $color="#789066" textLength="92">Luitpolderalm</MapLabel>
    <MapLabel x="84" y="439" $color="#4b4b4b" $halo="rgba(255,255,255,0.8)" textLength="67">Vorderriß</MapLabel>
    <MapLabel $color="#86738f" $halo="rgba(245,240,245,0.8)" transform="translate(416 338) rotate(-8)" textLength="62">Jachenau</MapLabel>
    <MapLabel $color="#86738f" $halo="rgba(245,240,245,0.8)" transform="translate(966 139) rotate(76)" textLength="68">Jachenau</MapLabel>
    <MapLabel x="1000" y="693" $anchor="start" textLength="49">Gramm</MapLabel>
    <MapLabel x="1028" y="711" $anchor="start" textLength="21.500">147</MapLabel>

    <rect x="44.500" y="531.500" width="68" height="25" rx="3" fill="#f0f0ee" stroke="#c4c6c4" strokeWidth="1.500" />
    <MapLabel x="78" y="552" $color="#4c4c4c" $halo="none" textLength="48">TÖL 24</MapLabel>
    <rect x="547" y="424" width="57.500" height="25" rx="3" fill="#f1f2dc" stroke="#cfd0ac" strokeWidth="1.500" />
    <MapLabel x="576.500" y="442" $color="#56564a" $halo="none" textLength="39">B 307</MapLabel>
  </MapCanvas>
);

/* ---------- app ---------- */

const paths = [
  ["Path to the NDWI-Images", "GEE_Images_all"],
  ["Path to exogenous factors", "exo_factors_all.csv"],
  ["Path to image timestamps", "Metadata_all_with_Index.csv"],
];

const parameters = [
  ["Cumulative precipitation [mm]", "250,00"],
  ["Average discharge [m³/s]", "5,00"],
  ["Extreme precipitation events", "2"],
  ["Extreme discharge events", "5"],
];

export default function App() {
  return (
    <>
      <GlobalStyle />
      <Page>
        <Sidebar>
          <SidebarTitle><WaveIcon /><TitleText>River Shift Settings</TitleText></SidebarTitle>
          <Fields $top={24}>
            {paths.map(([label, value]) => (
              <Field key={label}>
                <FieldLabel>{label}</FieldLabel>
                <InputBox><InputValue>{value}</InputValue></InputBox>
              </Field>
            ))}
          </Fields>
          <Divider />
          <SidebarSubtitle>Forecast Parameters</SidebarSubtitle>
          <Fields>
            {parameters.map(([label, value]) => (
              <Field key={label}>
                <FieldLabel>{label}</FieldLabel>
                <InputBox>
                  <InputValue>{value}</InputValue>
                  <Steppers><MinusIcon /><PlusIcon /></Steppers>
                </InputBox>
              </Field>
            ))}
          </Fields>
          <Slider>
            <FieldLabel>Forecast Horizon (days)</FieldLabel>
            <SliderTop><SliderValue>65</SliderValue></SliderTop>
            <Track><TrackFill /><Thumb /></Track>
            <SliderRange><span>1</span><span>500</span></SliderRange>
          </Slider>
          <Button $primary $top={27}>Start Prediction</Button>
        </Sidebar>
        <Main>
          <PageTitle>River Shift Prediction App</PageTitle>
          <Lead $top={25}>
            <Line $tracking={0.035}>Explore predicted changes in river courses based on remote sensing and hydrological factors by applying different scenarios.</Line>
          </Lead>
          <Lead $top={25}>
            <Line $tracking={-0.01}>The output is a heatmap which indicates the future river shift. The predicted direction of shift is blue and the current or past location red.</Line>
            <Line $tracking={0.08}>The intensity of the color reflects the likelihood of change.</Line>
          </Lead>
          <Alert>Please be patient, this may take a while...</Alert>
          <SectionTitle>Map with Overlay</SectionTitle>
          <MapFrame>
            <Terrain />
            <ZoomControl>
              <ZoomButton><svg width="18" height="18"><path d="M0 9h18M9 0v18" stroke="#000" strokeWidth="3" /></svg></ZoomButton>
              <ZoomButton><svg width="18" height="18"><path d="M0 9h18" stroke="#000" strokeWidth="3" /></svg></ZoomButton>
            </ZoomControl>
            <LayersControl><LayersIcon /></LayersControl>
            <Attribution>
              <FlagIcon />
              <MapLink>Leaflet</MapLink>
              <span>|</span>
              <span>© <MapLink>OpenStreetMap</MapLink> contributors</span>
            </Attribution>
          </MapFrame>
          <Button $top={35} $gap={5}><InboxIcon />Download HTML Karte</Button>
        </Main>
      </Page>
    </>
  );
}
